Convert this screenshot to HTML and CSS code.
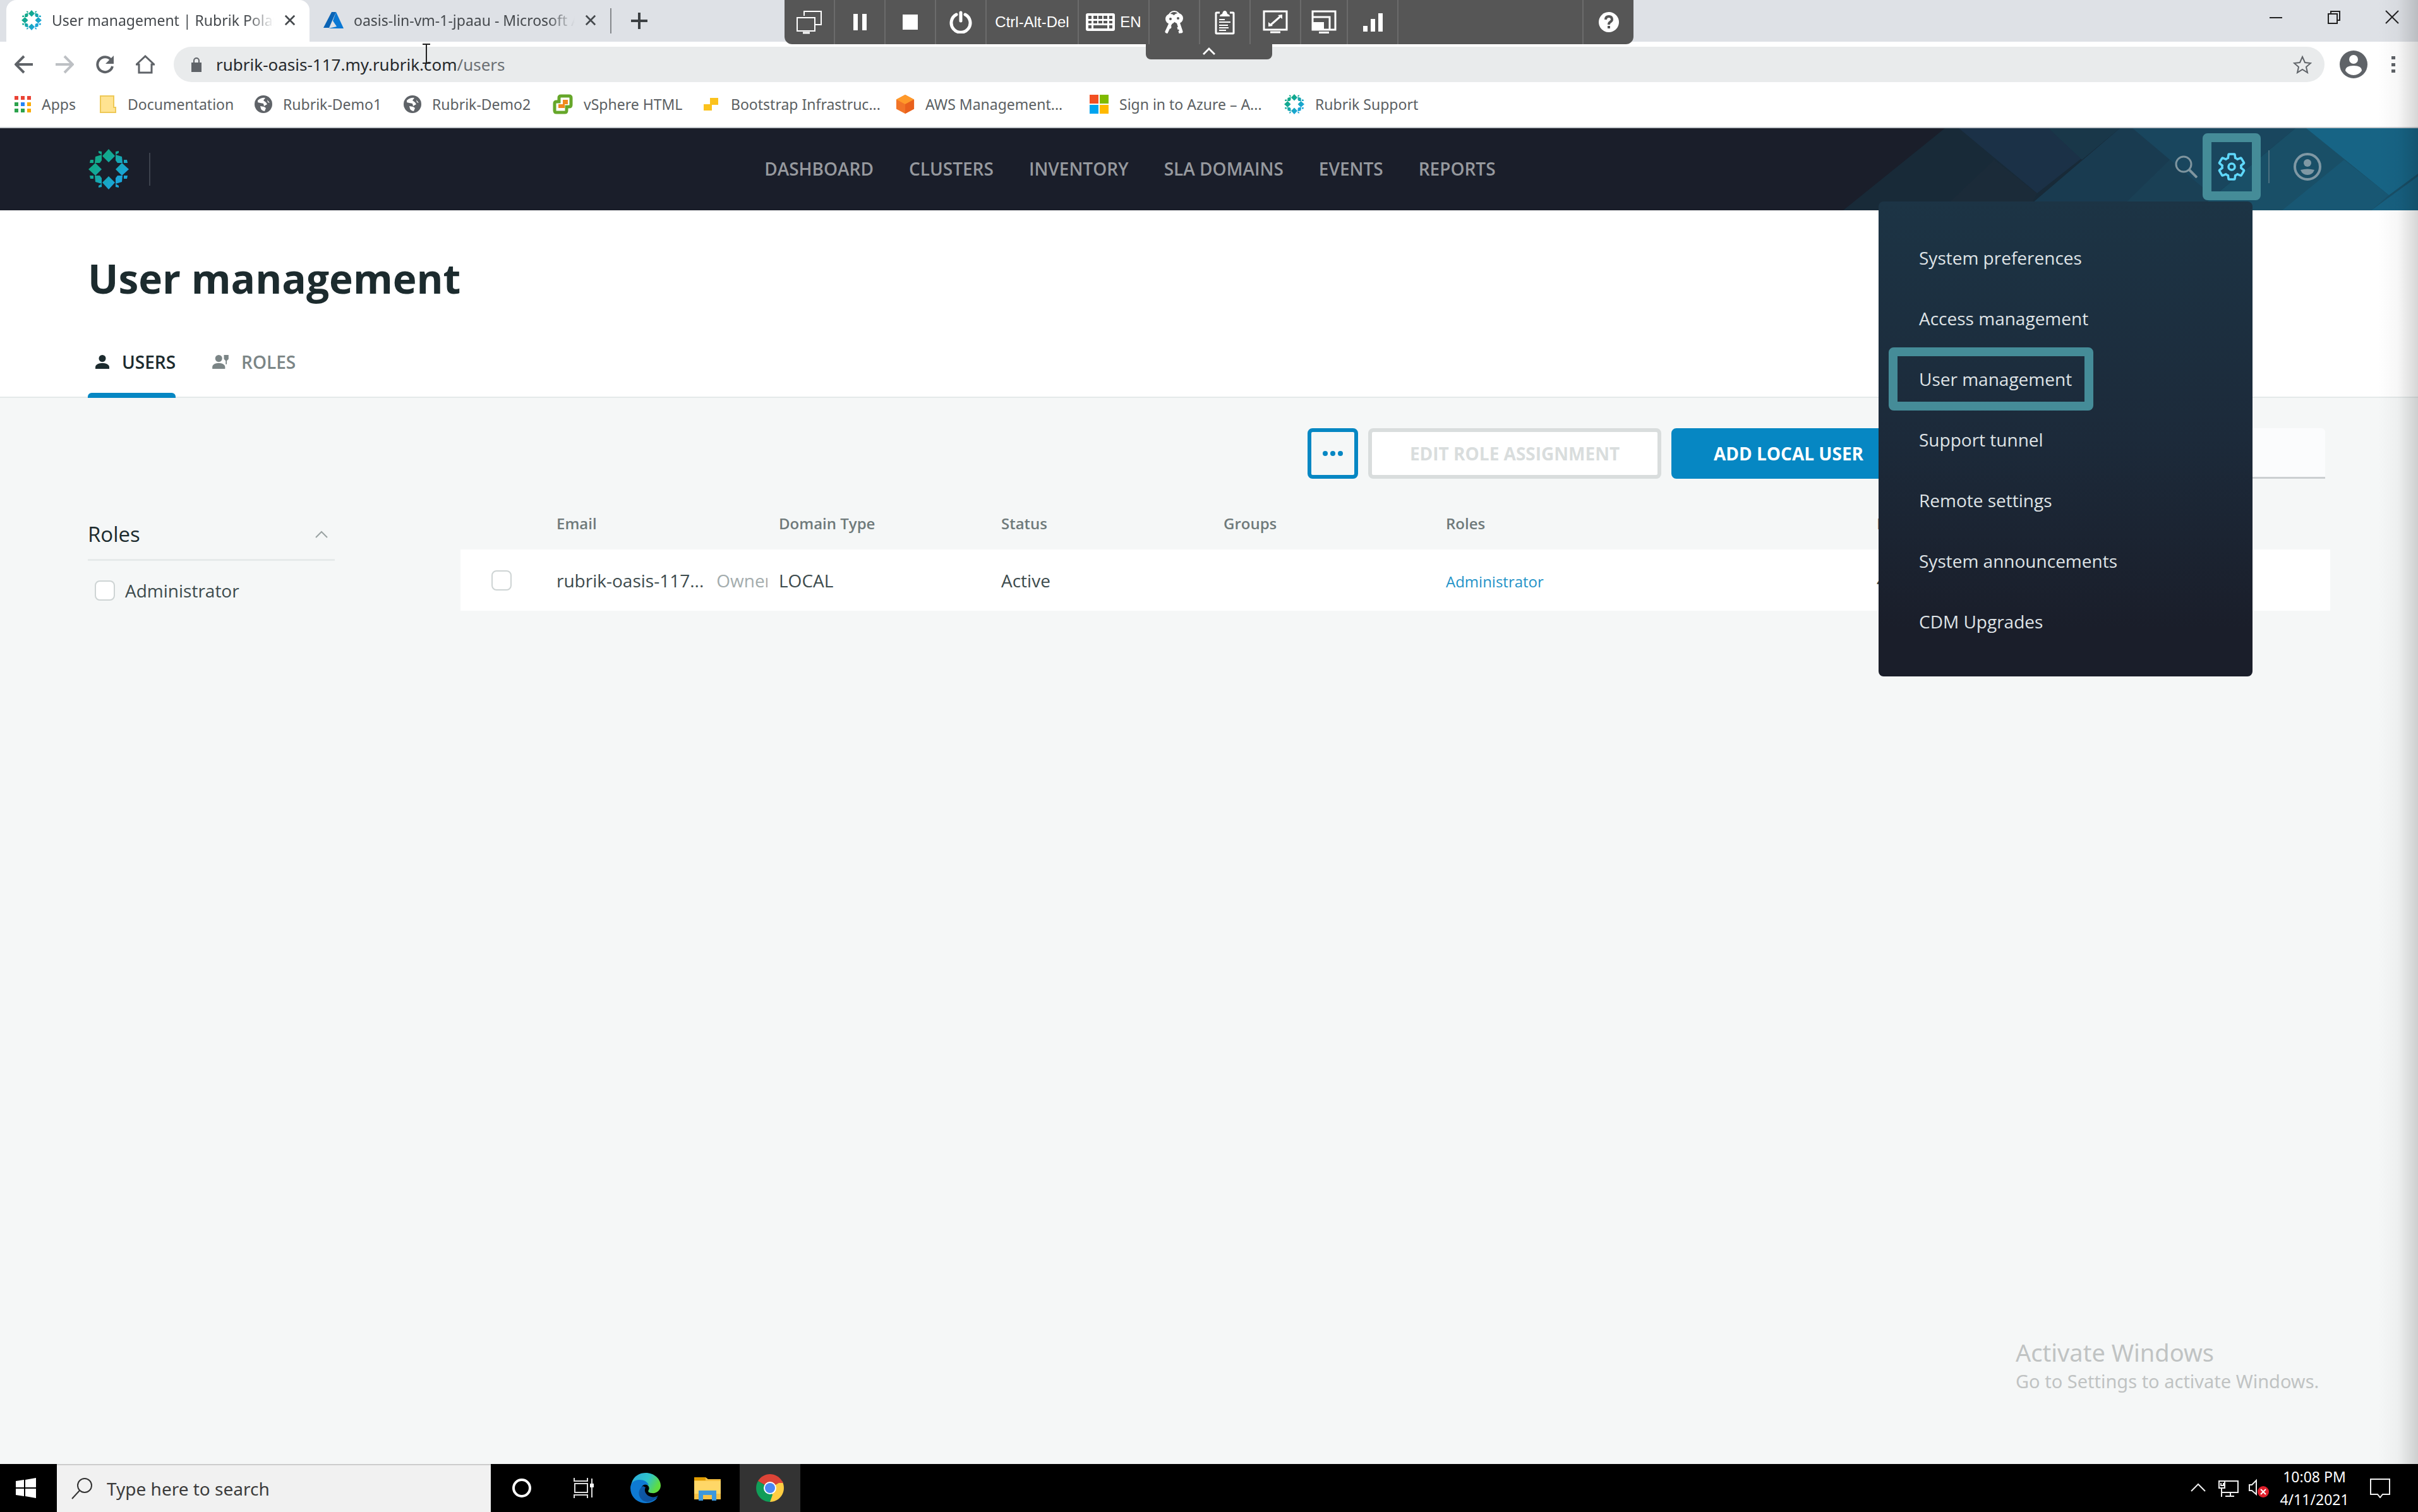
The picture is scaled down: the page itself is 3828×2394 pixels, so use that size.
FILE: index.html
```html
<!DOCTYPE html>
<html lang="en">
<head>
<meta charset="utf-8">
<title>User management | Rubrik Polaris</title>
<link rel="stylesheet" href="styles.css">
</head>
<body>
<svg class="defs" aria-hidden="true">
  <defs>
    <linearGradient id="brand" x1="0" y1="0" x2="1" y2="1"><stop offset="0.3" stop-color="#12a98c"/><stop offset="0.75" stop-color="#1aa5d8"/></linearGradient>
    <linearGradient id="edgeTop" x1="0" y1="0" x2="1" y2="0.4"><stop offset="0" stop-color="#2aa8e0"/><stop offset="0.6" stop-color="#2fc4c8"/><stop offset="1" stop-color="#5fdc3f"/></linearGradient>
    <linearGradient id="edgeLow" x1="0" y1="0" x2="1" y2="1"><stop offset="0" stop-color="#0e5ba8"/><stop offset="1" stop-color="#0c4f9c"/></linearGradient>
    <symbol id="rubrik" viewBox="0 0 64 64">
      <g fill="url(#brand)">
        <path d="M32 0 42 11 32 21 22 11zM32 43 42 53 32 64 22 53zM0 32 11 22 21 32 11 42zM43 32 53 22 64 32 53 42z"/>
        <path d="M11 12l10-3v9l-3 4h-8zM53 12l-10-3v9l3 4h8zM11 52l10 3v-9l-3-4h-8zM53 52l-10 3v-9l3-4h8z"/>
        <path d="M16 3l5 1v5l-5-3zM48 3l-5 1v5l5-3zM16 61l5-1v-5l-5 3zM48 61l-5-1v-5l5 3zM3 17h5v5H2zM61 17h-5v5h6zM3 47h5v-5H2zM61 47h-5v-5h6z"/>
      </g>
    </symbol>
    <symbol id="globe" viewBox="0 0 28 28">
      <circle cx="14" cy="14" r="14" fill="#5f6368"/>
      <path d="M5 8q6-5 12-4l-3 4 4 3 2 3-5 3-1-4-5-1-4-1zM9 17l6 1 3 2-2 5q-5-1-6-4zM20 7l4 5-3-1z" fill="#fff"/>
    </symbol>
    <symbol id="cross" viewBox="0 0 20 20"><path d="M2 2 18 18M18 2 2 18" fill="none" stroke="currentColor" stroke-width="3"/></symbol>
    <symbol id="person" viewBox="0 0 24 24"><circle cx="12" cy="6" r="6"/><path d="M0 24v-3c0-4 6-7 12-7s12 3 12 7v3z"/></symbol>
  </defs>
</svg>

<div class="desktop">
  <div class="tabstrip">
    <div class="tab tab-active">
      <svg class="i32"><use href="#rubrik"/></svg>
      <span class="tab-title">User management | Rubrik Polaris</span>
      <button class="plain" aria-label="Close tab"><svg class="i18"><use href="#cross"/></svg></button>
    </div>
    <div class="tab">
      <svg class="i32" viewBox="0 0 32 32"><path d="M13 3h7L9 28H0z" fill="#0a63b5"/><path d="M20 3l12 26H8l13-3-6-9z" fill="#0a78d4"/></svg>
      <span class="tab-title">oasis-lin-vm-1-jpaau - Microsoft Azure</span>
      <button class="plain" aria-label="Close tab"><svg class="i18"><use href="#cross"/></svg></button>
    </div>
    <button class="plain new-tab" aria-label="New tab"><svg class="i26" viewBox="0 0 26 26"><path d="M13 0v26M0 13h26" stroke="#3c4043" stroke-width="4"/></svg></button>
    <div class="window-controls">
      <button class="plain" aria-label="Minimize"><svg class="i22" viewBox="0 0 22 22"><path d="M1 12h20" stroke="#222" stroke-width="2"/></svg></button>
      <button class="plain" aria-label="Restore"><svg class="i22" viewBox="0 0 22 22"><path d="M2 6h14v15H2zM6 6V2h14v14h-4" fill="none" stroke="#222" stroke-width="2"/></svg></button>
      <button class="plain" aria-label="Close"><svg class="i22" viewBox="0 0 22 22"><path d="M1 1 21 21M21 1 1 21" stroke="#222" stroke-width="2"/></svg></button>
    </div>
  </div>

  <div class="toolbar">
    <button class="plain" aria-label="Back"><svg class="i30" viewBox="0 0 30 30"><path d="M29 15H3M15 2 2 15l13 13" fill="none" stroke="#5f6368" stroke-width="4"/></svg></button>
    <button class="plain" aria-label="Forward"><svg class="i30" viewBox="0 0 30 30"><path d="M1 15h26M15 2l13 13-13 13" fill="none" stroke="#bdc0c4" stroke-width="4"/></svg></button>
    <button class="plain" aria-label="Reload"><svg class="i30" viewBox="0 0 30 30"><path d="M25 8A12 12 0 1 0 27 18" fill="none" stroke="#5f6368" stroke-width="4"/><path d="M29 1v13H16z" fill="#5f6368"/></svg></button>
    <button class="plain" aria-label="Home"><svg class="i30" viewBox="0 0 30 30"><path d="M1 15 15 2l14 13h-4v13H5V15z" fill="none" stroke="#5f6368" stroke-width="3"/></svg></button>
    <div class="omnibox">
      <svg class="lock" viewBox="0 0 18 24"><path d="M1 9h16v15H1z" fill="#5f6368"/><path d="M5 10V6a4 4 0 0 1 8 0v4" fill="none" stroke="#5f6368" stroke-width="2"/></svg>
      <span class="url">rubrik-oasis-117.my.rubrik.com<span class="path">/users</span></span>
      <button class="plain" aria-label="Bookmark"><svg class="i30" viewBox="0 0 30 30"><path d="M15 3l4 9 9 1-7 6 2 9-8-5-8 5 2-9-7-6 9-1z" fill="none" stroke="#5f6368" stroke-width="2"/></svg></button>
    </div>
    <button class="plain" aria-label="Profile"><svg class="i44" viewBox="0 0 44 44"><circle cx="22" cy="22" r="22" fill="#5f6368"/><circle cx="22" cy="14" r="7" fill="#fff"/><path d="M9 32q0-8 13-8t13 8q-5 7-13 7T9 32z" fill="#fff"/></svg></button>
    <button class="plain menu-dots" aria-label="Menu"><svg class="dots" viewBox="0 0 6 28"><path d="M0 1h6v5H0zM0 12h6v5H0zM0 22h6v5H0z" fill="#5f6368"/></svg></button>
  </div>

  <nav class="bookmarks" aria-label="Bookmarks">
    <a href="#" class="bm-apps"><svg class="i26" viewBox="0 0 26 26"><path d="M0 0h6v6H0zM10 0h6v6h-6zM20 0h6v6h-6z" fill="#ea4335"/><path d="M0 10h6v6H0zM0 20h6v6H0zM10 20h6v6h-6z" fill="#2ba24c"/><path d="M10 10h6v6h-6z" fill="#2385f5"/><path d="M20 10h6v6h-6zM20 20h6v6h-6z" fill="#f9ab00"/></svg>Apps</a>
    <a href="#" class="bm-docs"><svg class="i28" viewBox="0 0 28 28"><path d="M2 1h21v18h3v8H2z" fill="#ffe391" stroke="#eec957" stroke-width="2"/></svg>Documentation</a>
    <a href="#" class="bm-demo"><svg class="i28"><use href="#globe"/></svg>Rubrik-Demo1</a>
    <a href="#" class="bm-demo"><svg class="i28"><use href="#globe"/></svg>Rubrik-Demo2</a>
    <a href="#" class="bm-vsphere"><svg class="i32" viewBox="0 0 32 32"><path d="M13 3h13q3 0 3 3v11q0 3-3 3h-4v6q0 3-3 3H6q-3 0-3-3V15q0-3 3-3h4V6q0-3 3-3z" fill="#fff" stroke="#66a72a" stroke-width="5"/><path d="M16 9h8v7h-5v6H9v-6h7z" fill="#f08a1d"/></svg>vSphere HTML</a>
    <a href="#" class="bm-boot"><svg class="i28" viewBox="0 0 28 28"><path d="M12 4h13v11H15v9H2V14h10z" fill="#fbc21d"/></svg>Bootstrap Infrastruc...</a>
    <a href="#" class="bm-aws"><svg class="i30" viewBox="0 0 30 32"><path d="M15 0l15 8v16l-15 8L0 24V8z" fill="#f27427"/><path d="M15 0l15 8-15 8L0 8z" fill="#ff9a2a"/><path d="M15 16l15-8v16l-15 8z" fill="#e9601c"/></svg>AWS Management...</a>
    <a href="#" class="bm-azure"><svg class="i30" viewBox="0 0 30 30"><path d="M0 0h14v14H0z" fill="#f25022"/><path d="M16 0h14v14H16z" fill="#7fba00"/><path d="M0 16h14v14H0z" fill="#00a4ef"/><path d="M16 16h14v14H16z" fill="#ffb900"/></svg>Sign in to Azure – A...</a>
    <a href="#" class="bm-support"><svg class="i32"><use href="#rubrik"/></svg>Rubrik Support</a>
  </nav>

  <header class="app-header">
    <svg class="facets" viewBox="0 0 920 130" preserveAspectRatio="none">
      <path d="M171 0h749v130H10z" fill="#182a38"/>
      <path d="M249 50 317 103 303 130H165z" fill="#1b2b39"/>
      <path d="M193 0h255L317 103z" fill="#1b3147"/>
      <path d="M335 0h113l-60 50z" fill="#193749"/>
      <path d="M448 0h472v130H296z" fill="#193b50"/>
      <path d="M527 50l80 60v20H445z" fill="#1a4055"/>
      <path d="M468 0h258l-130 108z" fill="#19465e"/>
      <path d="M726 0h194v130H570z" fill="#194f67"/>
      <path d="M803 50l71 56-28 24H705z" fill="#185773"/>
      <path d="M743 0h177v72l-46 34z" fill="#176485"/>
      <path d="M920 76v54h-74z" fill="#176080"/>
    </svg>
    <a href="#" class="logo" aria-label="Home"><svg class="i64"><use href="#rubrik"/></svg></a>
    <nav class="app-nav" aria-label="Main">
      <a href="#">DASHBOARD</a><a href="#">CLUSTERS</a><a href="#">INVENTORY</a><a href="#">SLA DOMAINS</a><a href="#">EVENTS</a><a href="#">REPORTS</a>
    </nav>
    <div class="app-tools">
      <button class="plain" aria-label="Search"><svg class="i36" viewBox="0 0 36 36"><circle cx="14" cy="14" r="12" fill="none" stroke="#7f959f" stroke-width="3"/><path d="M23 23 35 35" stroke="#7f959f" stroke-width="4"/></svg></button>
      <button class="plain gear" aria-label="Settings"><svg class="i44" viewBox="1 1 22 22"><path d="M19.43 12.98c.04-.32.07-.64.07-.98s-.03-.66-.07-.98l2.11-1.65c.19-.15.24-.42.12-.64l-2-3.46c-.12-.22-.39-.3-.61-.22l-2.49 1c-.52-.4-1.08-.73-1.69-.98l-.38-2.65C14.46 2.18 14.25 2 14 2h-4c-.25 0-.46.18-.49.42l-.38 2.65c-.61.25-1.17.59-1.69.98l-2.49-1c-.23-.09-.49 0-.61.22l-2 3.46c-.13.22-.07.49.12.64l2.11 1.65c-.04.32-.07.65-.07.98s.03.66.07.98l-2.11 1.65c-.19.15-.24.42-.12.64l2 3.46c.12.22.39.3.61.22l2.49-1c.52.4 1.08.73 1.69.98l.38 2.65c.03.24.24.42.49.42h4c.25 0 .46-.18.49-.42l.38-2.65c.61-.25 1.17-.59 1.69-.98l2.49 1c.23.09.49 0 .61-.22l2-3.46c.12-.22.07-.49-.12-.64z" fill="none" stroke="#5fd8fb" stroke-width="1.8"/><circle cx="12" cy="12" r="2.5" fill="none" stroke="#5fd8fb" stroke-width="1.8"/></svg></button>
      <button class="plain account" aria-label="Account"><svg class="i44" viewBox="0 0 44 44"><circle cx="22" cy="22" r="20" fill="none" stroke="#7f98a4" stroke-width="4"/><circle cx="22" cy="16" r="6" fill="#7f98a4"/><path d="M11 27q11-3 22 0-3 8-11 8t-11-8z" fill="#7f98a4"/></svg></button>
    </div>
    <div class="settings-menu">
      <a href="#">System preferences</a><a href="#">Access management</a><a href="#" class="current">User management</a><a href="#">Support tunnel</a><a href="#">Remote settings</a><a href="#">System announcements</a><a href="#">CDM Upgrades</a>
    </div>
  </header>

  <section class="page-head">
    <h1>User management</h1>
    <div class="page-tabs">
      <a href="#" class="selected"><svg class="i22"><use href="#person"/></svg>USERS</a>
      <a href="#"><svg class="roles-icon" viewBox="0 0 28 24"><circle cx="11" cy="6" r="6"/><path d="M0 24v-3c0-4 5-7 11-7s11 3 11 7v3z"/><path d="M20 0h8v7l-3 3v6h-2v-6l-3-3z"/></svg>ROLES</a>
    </div>
  </section>

  <main class="content">
    <div class="actions">
      <button class="btn more" aria-label="More actions"><svg class="more-dots" viewBox="0 0 32 8"><circle cx="4" cy="4" r="4"/><circle cx="16" cy="4" r="4"/><circle cx="28" cy="4" r="4"/></svg></button>
      <button class="btn edit" disabled>EDIT ROLE ASSIGNMENT</button>
      <button class="btn add">ADD LOCAL USER</button>
      <input class="search" type="search" aria-label="Search users">
    </div>
    <div class="columns">
      <aside class="filters">
        <button class="plain filter-head">Roles<svg class="chev" viewBox="0 0 20 12"><path d="M1 11 10 2l9 9" fill="none" stroke="#9aa3a3" stroke-width="2"/></svg></button>
        <label class="filter-item"><input type="checkbox">Administrator</label>
      </aside>
      <table class="users">
        <colgroup><col class="c-check"><col class="c-std"><col class="c-std"><col class="c-std"><col class="c-std"><col class="c-roles"><col></colgroup>
        <thead><tr><th></th><th>Email</th><th>Domain Type</th><th>Status</th><th>Groups</th><th>Roles</th><th>Last Login</th></tr></thead>
        <tbody><tr>
          <td class="check"><input type="checkbox" aria-label="Select user"></td>
          <td><div class="email"><span>rubrik-oasis-117...</span><span class="owner">Owner</span></div></td>
          <td>LOCAL</td><td>Active</td><td></td><td><a href="#">Administrator</a></td><td>4/11/2021</td>
        </tr></tbody>
      </table>
    </div>
  </main>

  <footer class="taskbar">
    <button class="plain start" aria-label="Start"><svg class="i32" viewBox="0 0 32 32"><path d="M0 5l13-2v12H0zM15 3l17-3v15H15zM0 17h13v12L0 27zM15 17h17v15l-17-3z" fill="#fff"/></svg></button>
    <label class="task-search"><svg class="i34" viewBox="0 0 34 34"><circle cx="21" cy="12" r="11" fill="none" stroke="#333" stroke-width="2"/><path d="M13 20 1 33" stroke="#333" stroke-width="2"/></svg><input type="text" placeholder="Type here to search"></label>
    <div class="task-apps">
      <button class="plain" aria-label="Cortana"><svg class="i32" viewBox="0 0 32 32"><circle cx="16" cy="16" r="13" fill="none" stroke="#fff" stroke-width="4"/></svg></button>
      <button class="plain" aria-label="Task View"><svg class="i32" viewBox="0 0 32 32"><path d="M2 9h20v14H2zM1 0v5h21V0M1 32v-5h21v5M29 1v30" fill="none" stroke="#ddd" stroke-width="2"/><path d="M26 9h6v6h-6z" fill="#fff"/></svg></button>
      <button class="plain" aria-label="Edge"><svg class="i48" viewBox="0 0 48 48"><path d="M1 20C3 6 14 0 24 0c14 0 24 10 24 20 0 8-7 13-14 12-5 0-7-2-5-5 2-4-1-9-7-9-8 0-17 2-21 8z" fill="url(#edgeTop)"/><path d="M0 24c0-8 6-13 14-13 8 0 14 4 15 9-7-4-13 1-12 8 1 9 8 14 17 14 3 0 6-1 9-3-4 6-11 9-19 9C10 48 0 37 0 24z" fill="#0e7ad3"/><path d="M20 21c-9 5-9 19 2 24 8 3 18-2 22-9-5 3-10 3-14 1-6-3-9-9-6-14z" fill="url(#edgeLow)"/></svg></button>
      <button class="plain" aria-label="File Explorer"><svg class="i44" viewBox="0 0 44 44"><path d="M1 5h18l4 3h20v32H1z" fill="#f7c244"/><path d="M1 5h18v5H1z" fill="#e09c00"/><path d="M1 11h42v20H1z" fill="#ffd767"/><path d="M8 42V26h28v16h-7v-9H15v9z" fill="#3c98dc"/></svg></button>
      <button class="plain running" aria-label="Chrome"><svg class="i44" viewBox="0 0 44 44"><path d="M22 22 3 11A22 22 0 0 1 41 11z" fill="#dc4437"/><path d="M22 22 41 11A22 22 0 0 1 22 44z" fill="#ffcd42"/><path d="M22 22l4 11-4 11A22 22 0 0 1 3 11z" fill="#109d58"/><path d="M22 11h19l2 3H22z" fill="#dc4437"/><circle cx="22" cy="22" r="10" fill="#fff"/><circle cx="22" cy="22" r="8" fill="#4a88f4"/></svg></button>
    </div>
    <div class="tray">
      <svg class="i24" viewBox="0 0 24 24"><path d="M1 17 12 6l11 11" fill="none" stroke="#eee" stroke-width="2"/></svg>
      <svg class="i32 net" viewBox="0 0 32 32"><path d="M10 5h21v18H6M19 23v6M11 29h14M1 5h9v11H1zM5 16v14M4 8v4h4V8" fill="none" stroke="#eee" stroke-width="2"/></svg>
      <svg class="i32 sound" viewBox="0 0 32 32"><path d="M1 11h4l7-7v22l-7-6H1z" fill="none" stroke="#eee" stroke-width="2"/><circle cx="23" cy="22" r="9" fill="#e0202c"/><path d="M19 18l8 8M27 18l-8 8" stroke="#fff" stroke-width="2"/></svg>
      <div class="clock"><span>10:08 PM</span><span>4/11/2021</span></div>
      <svg class="i32" viewBox="0 0 32 32"><path d="M1 2h30v24H20l-4 5-4-5H1z" fill="none" stroke="#eee" stroke-width="2"/></svg>
    </div>
  </footer>

  <div class="edge-shade"></div>
  <div class="watermark"><p class="wm-title">Activate Windows</p><p class="wm-text">Go to Settings to activate Windows.</p></div>
  <svg class="cursor" viewBox="0 0 14 32"><path d="M1 1h12M7 1v30M1 31h12" fill="none" stroke="#222" stroke-width="2"/></svg>

  <div class="vm-bar">
    <div class="vm-tools">
      <button class="plain w80" aria-label="Displays"><svg class="i40" viewBox="0 0 40 40"><path d="M12 10V3h27v21h-9M1 13h28v21H1z" fill="none" stroke="#fff" stroke-width="2"/><path d="M10 37h11" stroke="#fff" stroke-width="3"/></svg></button>
      <button class="plain w80" aria-label="Pause"><svg class="i26" viewBox="0 0 26 26"><path d="M3 0h7v26H3zM17 0h7v26h-7z" fill="#fff"/></svg></button>
      <button class="plain w80" aria-label="Stop"><svg class="i24" viewBox="0 0 24 24"><path d="M0 0h24v24H0z" fill="#fff"/></svg></button>
      <button class="plain w80" aria-label="Power"><svg class="i36" viewBox="0 0 36 36"><path d="M11 6a15 15 0 1 0 14 0M18 3v13" fill="none" stroke="#fff" stroke-width="5" stroke-linecap="round"/></svg></button>
      <button class="plain w146">Ctrl-Alt-Del</button>
      <button class="plain w112"><svg class="kbd" viewBox="0 0 46 28"><rect width="46" height="28" rx="3" fill="#fff"/><path d="M4 4h5v5H4zM12 4h6v5h-6zM20 4h6v5h-6zM28 4h6v5h-6zM37 4h5v5h-5zM4 12h5v4H4zM12 12h6v4h-6zM20 12h6v4h-6zM28 12h6v4h-6zM37 12h5v4h-5zM4 19h5v5H4zM12 19h22v5H12zM37 19h5v5h-5z" fill="#565656"/></svg>EN</button>
      <button class="plain w80" aria-label="Credentials"><svg class="i40" viewBox="0 0 40 40"><path d="M11 12a9 9 0 0 1 18 0" fill="none" stroke="#fff" stroke-width="2"/><path d="M15 20 8 35M26 20l5 15" stroke="#fff" stroke-width="5" stroke-linecap="round"/><path d="M15 29l-4-2M10 36l-3-1M25 30l4-1M27 36l4-1" stroke="#fff" stroke-width="4"/><circle cx="14" cy="15" r="5" fill="none" stroke="#fff" stroke-width="6"/><circle cx="26" cy="14" r="5" fill="none" stroke="#fff" stroke-width="6"/></svg></button>
      <button class="plain w80" aria-label="Clipboard"><svg class="i40" viewBox="0 0 40 40"><path d="M12 5H7q-1 0-1 1v31q0 1 1 1h26q1 0 1-1V6q0-1-1-1h-5" fill="none" stroke="#fff" stroke-width="3"/><path d="M12 11q0-3 4-4 1-5 4-5t4 5q4 1 4 4z" fill="#fff"/><path d="M11 16h9M11 20h18M11 25h14M11 29h15M11 33h11" stroke="#fff" stroke-width="2"/></svg></button>
      <button class="plain w80" aria-label="Full screen"><svg class="i40" viewBox="0 0 40 40"><path d="M2 3h36v29H2z" fill="none" stroke="#fff" stroke-width="3"/><path d="M12 36h16" stroke="#fff" stroke-width="3"/><path d="M12 25 28 11" stroke="#fff" stroke-width="3"/><path d="M31 8v7l-7-6zM9 27v-7l7 6z" fill="#fff"/></svg></button>
      <button class="plain w74" aria-label="Resize"><svg class="i40" viewBox="0 0 40 40"><path d="M2 3h36v29H2z" fill="none" stroke="#fff" stroke-width="3"/><path d="M2 12h27v20" fill="none" stroke="#fff" stroke-width="3"/><path d="M2 20h18v13H2zM12 35h16v3H12z" fill="#fff"/></svg></button>
      <button class="plain w80" aria-label="Signal"><svg class="i32" viewBox="0 0 32 32"><path d="M1 22h7v9H1zM13 11h7v20h-7zM25 2h7v29h-7z" fill="#fff"/></svg></button>
      <span class="vm-gap"></span>
      <button class="plain w78" aria-label="Help"><svg class="i34" viewBox="0 0 34 34"><circle cx="17" cy="17" r="16" fill="#fff"/><path d="M12 13q0-5 5-5t5 5q0 2-3 4-2 1-2 4M17 23v4" fill="none" stroke="#565656" stroke-width="4"/></svg></button>
    </div>
    <button class="plain vm-pull" aria-label="Collapse"><svg class="i20" viewBox="0 0 20 20"><path d="M1 14 10 5l9 9" fill="none" stroke="#fff" stroke-width="3"/></svg></button>
  </div>
</div>
</body>
</html>
```
FILE: styles.css
```css
*,
*::before,
*::after { box-sizing: border-box; }

body {
  margin: 0;
  font-family: "Open Sans", "Noto Sans", sans-serif;
  font-size: 28px;
  color: #3d4b4d;
}

a { color: inherit; text-decoration: none; }
svg { display: block; flex: none; }
.defs { position: absolute; width: 0; height: 0; }

.i18 { width: 18px; height: 18px; }
.i20 { width: 20px; height: 20px; }
.i22 { width: 22px; height: 22px; }
.i24 { width: 24px; height: 24px; }
.i26 { width: 26px; height: 26px; }
.i28 { width: 28px; height: 28px; }
.i30 { width: 30px; height: 30px; }
.i32 { width: 32px; height: 32px; }
.i34 { width: 34px; height: 34px; }
.i36 { width: 36px; height: 36px; }
.i40 { width: 40px; height: 40px; }
.i44 { width: 44px; height: 44px; }
.i48 { width: 48px; height: 48px; }
.i64 { width: 64px; height: 64px; }

.plain {
  display: flex;
  align-items: center;
  justify-content: center;
  padding: 0;
  border: 0;
  background: none;
  font: inherit;
  color: inherit;
}

.desktop {
  position: relative;
  display: flex;
  flex-direction: column;
  min-height: 100vh;
  overflow: hidden;
  background: #f5f7f7;
}

/* Browser tabs */
.tabstrip {
  display: flex;
  align-items: center;
  height: 66px;
  padding: 0 16px 0 10px;
  background: #dee1e6;
  font-family: "Noto Sans", sans-serif;
  font-size: 23px;
  color: #45494d;
}
.tab {
  display: flex;
  align-items: center;
  gap: 16px;
  width: 476px;
  height: 66px;
  padding: 0 22px 2px 22px;
}
.tab-active { width: 480px; padding-left: 24px; background: #fff; border-radius: 16px 16px 0 0; }
.tab-title {
  flex: 1;
  overflow: hidden;
  white-space: nowrap;
  mask-image: linear-gradient(to right, #000 88%, transparent);
}
.new-tab {
  width: 90px;
  height: 40px;
  border-left: 2px solid #85888c;
}
.window-controls { display: flex; gap: 70px; margin-left: auto; padding: 0 14px 12px 0; }

/* Address bar */
.toolbar {
  display: flex;
  align-items: center;
  gap: 34px;
  height: 72px;
  padding: 0 36px 0 23px;
  background: #fff;
}
.omnibox {
  display: flex;
  align-items: center;
  flex: 1;
  gap: 22px;
  height: 56px;
  margin-left: -4px;
  margin-right: -10px;
  padding: 0 20px 0 27px;
  border-radius: 28px;
  background: #e9ebec;
}
.lock { width: 18px; height: 26px; }
.url { flex: 1; font-family: "Noto Sans", sans-serif; font-size: 26px; color: #26292c; }
.path { color: #6c7074; }
.menu-dots { padding-left: 4px; }
.dots { width: 6px; height: 28px; }

/* Bookmarks */
.bookmarks {
  display: flex;
  align-items: center;
  height: 65px;
  padding: 0 0 10px 23px;
  background: #fff;
  border-bottom: 2px solid #c9cdd2;
  font-family: "Noto Sans", sans-serif;
  font-size: 23px;
  color: #5b5f63;
}
.bookmarks a { display: flex; align-items: center; gap: 17px; white-space: nowrap; }
.bm-apps { width: 134px; }
.bm-docs { width: 246px; }
.bm-demo { width: 236px; }
.bm-vsphere { width: 237px; }
.bm-boot { width: 306px; }
.bm-aws { width: 307px; }
.bm-azure { width: 308px; }

/* Application header */
.app-header {
  position: relative;
  display: flex;
  align-items: center;
  height: 130px;
  padding: 0 153px 0 140px;
  background: #1a1e2a;
}
.facets { position: absolute; right: 0; top: 0; width: 920px; height: 130px; }
.logo {
  padding-right: 34px;
  background: linear-gradient(#3d424d, #3d424d) right center / 2px 52px no-repeat;
}
.app-nav {
  display: flex;
  gap: 56px;
  margin: 0 auto 2px 27.5%;
  font-size: 28px;
  font-weight: 600;
  color: #96999e;
}
.app-tools { position: relative; display: flex; align-items: center; padding-bottom: 8px; }
.gear {
  width: 92px;
  height: 106px;
  margin: 0 12px 0 8px;
  border: 14px solid #458c98;
  border-radius: 8px;
}
.account { height: 52px; padding-left: 38px; border-left: 2px solid #4d7080; }

.settings-menu {
  position: absolute;
  z-index: 2;
  top: 116px;
  right: 262px;
  display: flex;
  flex-direction: column;
  align-items: flex-start;
  width: 592px;
  padding: 41px 16px 39px;
  border-radius: 8px;
  background: linear-gradient(#1c3445, #1c2a3a 50%, #1a1e2a 90%);
  font-weight: 500;
  color: #dfe3e6;
}
.settings-menu a {
  display: flex;
  align-items: center;
  height: 96px;
  padding: 0 48px;
}
.settings-menu .current {
  height: 100px;
  margin: -2px 0;
  padding: 0 20px 0 34px;
  border: 14px solid #458c98;
  border-radius: 8px;
}

/* Page heading */
.page-head {
  height: 297px;
  padding: 64px 139px 0;
  border-bottom: 2px solid #e4e9e9;
  background: #fff;
}
h1 { margin: 0; font-size: 64px; line-height: 88px; color: #1c2b2e; }
.page-tabs { display: flex; gap: 58px; margin-top: 56px; font-weight: 600; color: #7b8586; fill: currentColor; }
.page-tabs a { display: flex; align-items: center; gap: 20px; height: 89px; padding-bottom: 26px; }
.page-tabs .selected { padding-left: 12px; position: relative; color: #1c2b2e; }
.selected::after {
  content: "";
  position: absolute;
  left: 0;
  right: 0;
  bottom: 0;
  height: 8px;
  border-radius: 6px 6px 0 0;
  background: #0687c3;
}
.roles-icon { width: 26px; height: 22px; }

/* Content */
.content { flex: 1; padding: 48px 139px 0; }
.actions { display: flex; justify-content: flex-end; gap: 16px; padding-right: 8px; }
.btn {
  height: 80px;
  border: 6px solid #0687c3;
  border-radius: 8px;
  font: 700 28px "Open Sans", sans-serif;
}
.more { width: 80px; padding: 0 16px; background: transparent; fill: #0687c3; }
.more-dots { width: 32px; height: 8px; margin: auto; }
.edit { width: 464px; border-color: #d9dddd; background: #fff; color: #d9dddd; }
.add { width: 371px; background: #0687c3; color: #fff; }
.search {
  width: 648px;
  border: 0;
  border-bottom: 3px solid #cbcfd1;
  border-radius: 6px 6px 0 0;
  background: #fbfcfd;
}

.columns { display: flex; align-items: flex-start; justify-content: space-between; gap: 199px; }
.filters { width: 391px; padding-top: 48px; }
.filter-head {
  justify-content: space-between;
  width: 100%;
  height: 82px;
  padding-right: 11px;
  border-bottom: 3px solid #e6eaea;
  font-size: 33px;
  color: #1c2b2e;
}
.chev { width: 20px; height: 12px; }
.filter-item { display: flex; align-items: center; gap: 16px; padding: 28px 0 0 11px; }
input[type="checkbox"] {
  appearance: none;
  display: block;
  width: 32px;
  height: 32px;
  margin: 0;
  border: 2px solid #ced4d4;
  border-radius: 8px;
  background: #fff;
}

.users { flex: 1; table-layout: fixed; width: 100%; max-width: 2961px; border-collapse: collapse; }
.c-check { width: 152px; }
.c-std { width: 352px; }
.c-roles { width: 682px; }
.users th { height: 112px; padding: 28px 0 0; text-align: left; font-size: 24px; font-weight: 600; color: #6f7a7b; }
.users td { height: 97px; padding: 0; background: #fff; white-space: nowrap; }
.users .check { padding-left: 49px; }
.users td a { font-size: 24px; color: #1f93c8; }
.email { display: flex; gap: 20px; width: 334px; overflow: hidden; }
.owner { color: #a3acad; }

/* Taskbar */
.taskbar {
  display: flex;
  height: 76px;
  background: #000;
  font-family: "Noto Sans", sans-serif;
  color: #fff;
}
.start { width: 90px; padding-right: 8px; }
.task-search {
  display: flex;
  align-items: center;
  gap: 22px;
  width: 687px;
  padding-left: 23px;
  border-top: 2px solid #ccc;
  background: #f1f1f1;
}
.task-search input { flex: 1; border: 0; background: none; padding: 0; font: 28px "Noto Sans", sans-serif; }
.task-search input::placeholder { color: #3c3c3c; opacity: 1; }
.task-apps { display: flex; }
.task-apps button { width: 98px; }
.task-apps .running { width: 96px; margin-left: 2px; background: #333; }
.tray { display: flex; align-items: center; margin-left: auto; padding-right: 44px; }
.net { margin-left: 20px; }
.sound { margin-left: 16px; }
.clock {
  display: flex;
  flex-direction: column;
  align-items: center;
  width: 160px;
  padding-right: 16px;
  font-size: 23px;
  line-height: 36px;
}

/* Overlays */
.edge-shade {
  position: absolute;
  top: 0;
  right: 0;
  bottom: 76px;
  width: 64px;
  background: linear-gradient(to right, transparent, rgba(0, 0, 0, 0.03) 50%, rgba(0, 0, 0, 0.16));
  pointer-events: none;
}
.watermark { position: absolute; left: 3191px; bottom: 187px; color: #c0c3c3; font-family: "Noto Sans", sans-serif; }
.watermark p { margin: 0; }
.wm-title { font-size: 38px; line-height: 52px; }
.wm-text { font-size: 29px; line-height: 40px; }
.cursor { position: absolute; left: 668px; top: 69px; width: 14px; height: 32px; }

.vm-bar {
  position: absolute;
  left: 1242px;
  top: 0;
  width: 1344px;
  display: flex;
  flex-direction: column;
  color: #fff;
  font-family: "Liberation Sans", sans-serif;
  font-size: 24px;
}
.vm-tools { display: flex; width: 100%; height: 70px; border-radius: 0 0 12px 12px; background: #565656; }
.vm-tools button { flex: none; border-right: 2px solid #6b6b6b; gap: 8px; white-space: nowrap; }
.vm-tools button:last-child { border-right: 0; }
.kbd { width: 46px; height: 28px; }
.vm-bar .w74 { width: 74px; }
.vm-bar .w78 { width: 79px; }
.vm-bar .w80 { width: 80px; }
.vm-bar .w112 { width: 112px; }
.vm-bar .w146 { width: 146px; }
.vm-gap { flex: 1; border-right: 2px solid #6b6b6b; }
.vm-pull { width: 200px; height: 24px; margin-left: 572px; border-radius: 0 0 8px 8px; background: #565656; }
```
